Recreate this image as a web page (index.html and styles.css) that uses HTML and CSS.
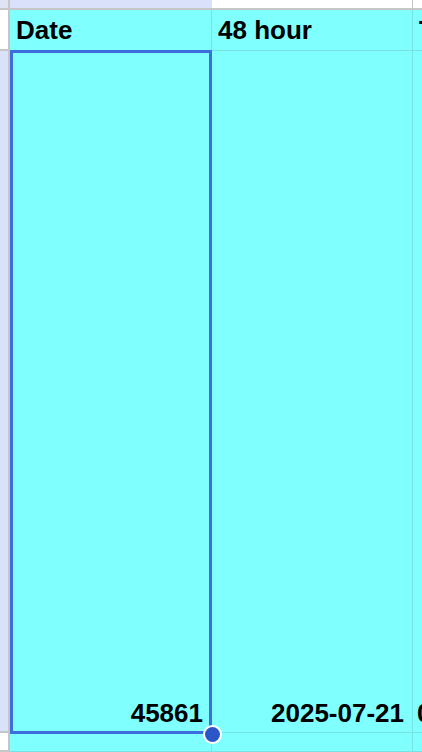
FILE: index.html
```html
<!DOCTYPE html>
<html>
<head>
<meta charset="utf-8">
<link rel="stylesheet" href="styles.css">
</head>
<body>
<div class="sheet">
  <div class="corner"></div>
  <div class="colhead colhead-sel"></div>
  <div class="colhead colhead-b"></div>
  <div class="colhead"></div>

  <div class="rowhead"></div>
  <div class="cell cell-a head"><span class="txt">Date</span></div>
  <div class="cell cell-b head"><span class="txt">48 hour</span></div>
  <div class="cell cell-c head"><span class="txt">Time</span></div>

  <div class="rowhead rowhead-sel"></div>
  <div class="cell cell-a num"><span class="txt">45861</span></div>
  <div class="cell cell-b num"><span class="txt">2025-07-21</span></div>
  <div class="cell cell-c tall"><span class="txt">0</span></div>

  <div class="rowhead"></div>
  <div class="cell cell-a"></div>
  <div class="cell cell-b"></div>
  <div class="cell cell-c"></div>

  <div class="selection"></div>
  <div class="handle"></div>
</div>
</body>
</html>
```

FILE: styles.css
```css
html, body {
  margin: 0;
  padding: 0;
  width: 422px;
  height: 752px;
  overflow: hidden;
  background: #ffffff;
}

.sheet {
  position: relative;
  display: grid;
  grid-template-columns: 10px 202px 201px 1fr;
  grid-template-rows: 10px 41px 682px 1fr;
  width: 422px;
  height: 752px;
  font-family: "Liberation Sans", Arial, sans-serif;
  font-weight: bold;
  font-size: 26px;
  color: #000000;
}

.corner {
  background: #dfe4f4;
  border-right: 2px solid #c4c7c5;
  border-bottom: 2px solid #c4c7c5;
}

.colhead {
  background: #ffffff;
  border-bottom: 2px solid #c4c7c5;
}

.colhead-sel {
  background: #d9e2fa;
}

.colhead-b {
  border-right: 1px solid #c4c7c5;
}

.rowhead {
  background: #ffffff;
  border-right: 2px solid #c4c7c5;
  border-bottom: 2px solid #c4c7c5;
}

.rowhead-sel {
  background: #d9e2fa;
}

.cell {
  background: #7ffffe;
  border-bottom: 1px solid #78e2e2;
  display: flex;
  align-items: flex-end;
  overflow: hidden;
  white-space: nowrap;
}

.cell-a,
.cell-b {
  border-right: 1px solid #78e2e2;
}

.txt {
  line-height: 29px;
}

.head {
  justify-content: flex-start;
  padding: 0 0 5px 6px;
}

.num {
  justify-content: flex-end;
  padding: 0 8px 4px 0;
}

.tall {
  padding: 0 0 4px 4px;
}

.selection {
  position: absolute;
  left: 10px;
  top: 50px;
  width: 202px;
  height: 684px;
  box-sizing: border-box;
  border: 3px solid #3c6fde;
  pointer-events: none;
}

.handle {
  position: absolute;
  left: 203px;
  top: 725px;
  width: 15px;
  height: 15px;
  border-radius: 50%;
  background: #2a56c8;
  border: 2px solid #ffffff;
}
```
